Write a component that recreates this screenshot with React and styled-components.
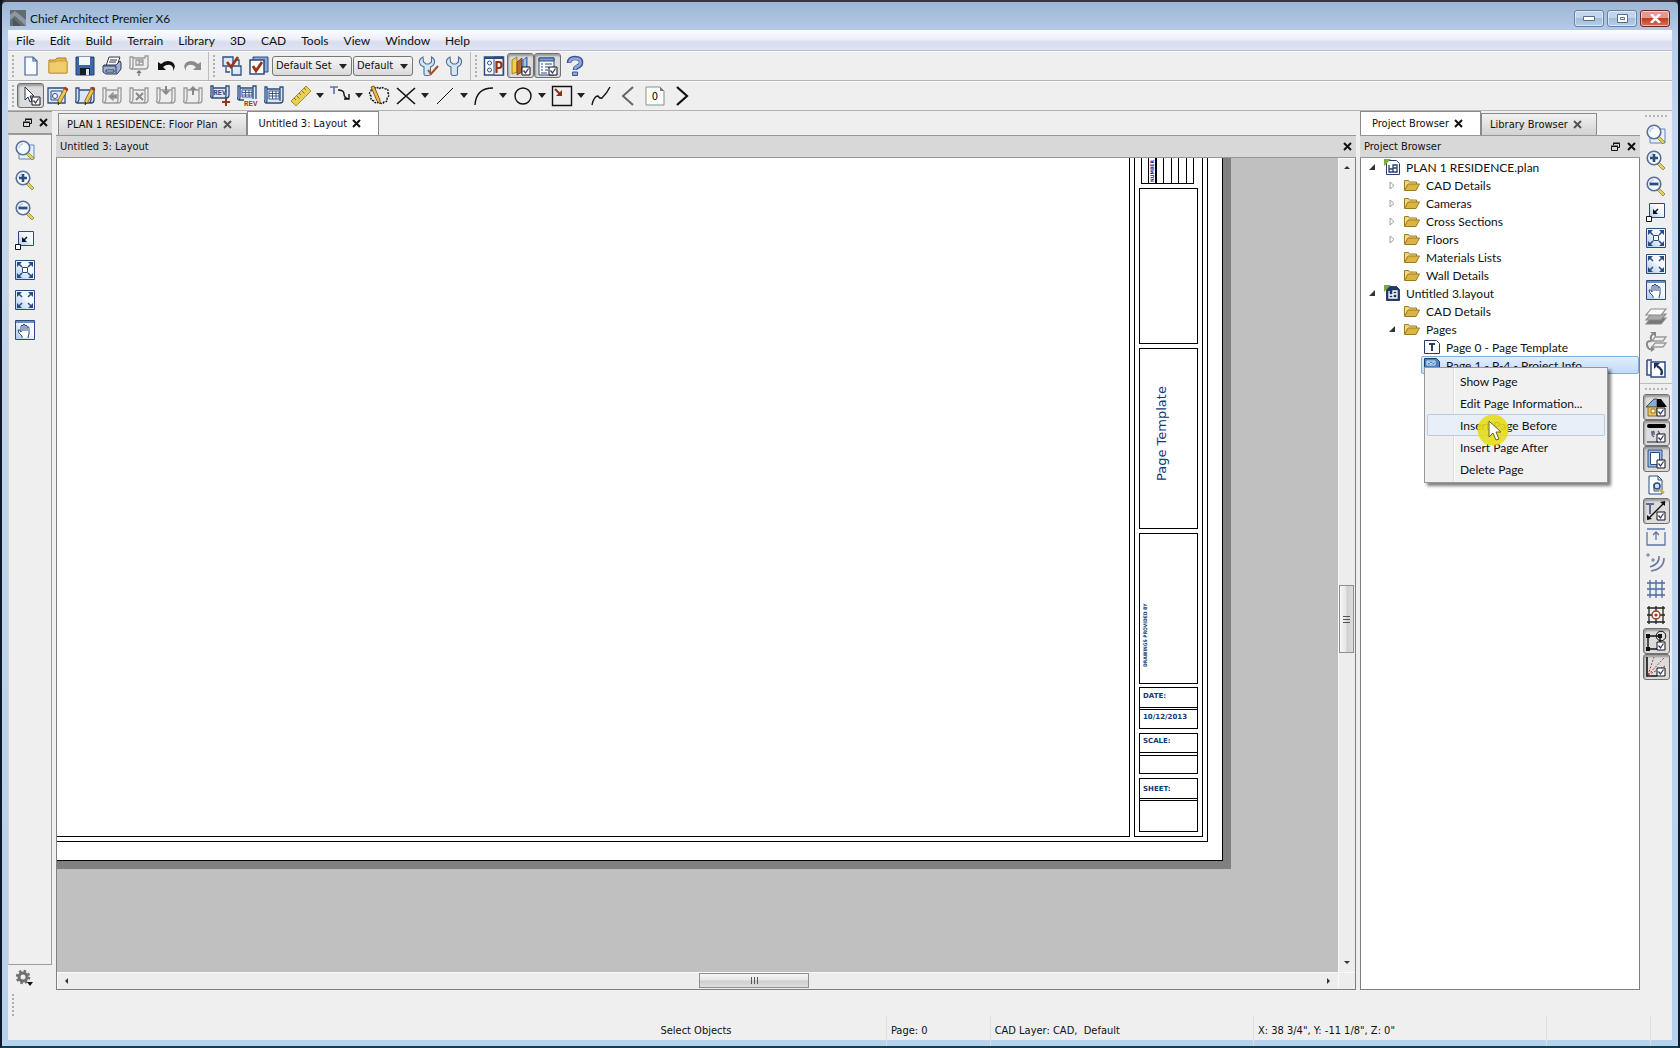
import styled, { createGlobalStyle, css } from 'styled-components';

const GlobalStyle = createGlobalStyle`
  * {
    box-sizing: border-box;
  }
  body {
    margin: 0;
    background: #0a1424;
  }
  button, select {
    font: inherit;
    color: inherit;
    padding: 0;
    margin: 0;
    border: 0;
    background: none;
  }
  svg {
    display: block;
  }
`;

const uiFont = `Lato, 'Open Sans', sans-serif`;
const dockFont = `'DejaVu Sans Condensed', 'DejaVu Sans', sans-serif`;

const Frame = styled.div`
  display: flex;
  flex-direction: column;
  min-height: 100vh;
  padding: 0 6px 6px;
  background: linear-gradient(#9db6d3, #b6cdea 32px, #c2d6ef 130px, #b7d2ec);
  border: 2px solid #10182a;
  border-top-color: #3a3440;
  border-bottom-color: #123c50;
  border-radius: 6px 6px 0 0;
  font: 12px ${uiFont};
  color: #111;
`;

const TitleBar = styled.header`
  display: flex;
  align-items: center;
  gap: 4px;
  height: 28px;
  padding: 4px 2px 0;
  h1 {
    flex: 1;
    margin: 0;
    font-size: 12px;
    font-weight: 400;
  }
`;

const WindowButtons = styled.div`
  display: flex;
  gap: 3px;
`;

const WindowButton = styled.button`
  display: grid;
  place-items: center;
  width: 30px;
  height: 17px;
  border: 1px solid #6482a8;
  border-radius: 3px;
  box-shadow: inset 0 0 0 1px #ffffff80;
  background: linear-gradient(#c3d5ea 45%, #a3bcd9 50%, #b7cfe8);
  ${({ $close }) =>
    $close &&
    css`
      border-color: #6b2a2a;
      background: linear-gradient(#e4998b 45%, #c23c25 50%, #d9705a);
    `}
`;

const Client = styled.div`
  flex: 1;
  display: flex;
  flex-direction: column;
  background: #efefef;
`;

const MenuBar = styled.nav`
  display: flex;
  gap: 15px;
  height: 21px;
  padding-left: 8px;
  background: linear-gradient(#fdfdff, #eef0f9 45%, #d9deef 60%, #e0e3f2);
  border-bottom: 1px solid #b8bcc8;
`;

const ToolBar = styled.div`
  display: flex;
  align-items: center;
  height: 30px;
  padding-left: 4px;
  border-bottom: 1px solid #b4b4b4;
  box-shadow: inset 0 1px #fbfbfb;
`;

const Grip = styled.span`
  flex: none;
  width: 2px;
  height: 22px;
  margin-right: 3px;
  background: repeating-linear-gradient(#b0b0b0 0 2px, transparent 2px 4px);
`;

const Divider = styled.span`
  width: 1px;
  height: 28px;
  margin: 0 4px 0 2px;
  background: #bdbdbd;
`;

const ToolButton = styled.button`
  flex: none;
  display: grid;
  place-items: center;
  width: 27px;
  height: ${({ $tall }) => $tall || 25}px;
  svg {
    overflow: visible;
  }
  ${({ $on }) =>
    $on &&
    css`
      border: 1px solid #707070;
      border-radius: 3px;
      background: #dcdcdc;
      box-shadow: inset 1px 2px 2px #9a9a9a;
    `}
`;

const DropButton = styled.button`
  display: grid;
  place-items: center;
  width: 12px;
  height: 25px;
`;

const SelectBox = styled.label`
  position: relative;
  width: ${({ $width }) => $width}px;
  margin-right: 1px;
  font: 11px ${dockFont};
  select {
    appearance: none;
    width: 100%;
    height: 20px;
    padding-left: 3px;
    border: 1px solid #777;
    border-radius: 3px;
    background: linear-gradient(#f6f6f6, #dadada);
  }
  svg {
    position: absolute;
    right: 5px;
    top: 8px;
    pointer-events: none;
  }
`;

const Workspace = styled.div`
  flex: 1;
  display: flex;
`;

const DockHeader = styled.div`
  display: flex;
  align-items: center;
  gap: 7px;
  height: 23px;
  padding: 0 4px;
  border: 1px solid #979797;
  border-width: 1px 0;
  background: #d8d8d8;
  font: 11px ${dockFont};
  span {
    flex: 1;
  }
`;

const LeftDock = styled.aside`
  display: flex;
  flex-direction: column;
  width: 44px;
  margin-right: 4px;
`;

const LeftTools = styled.div`
  flex: 1;
  display: flex;
  flex-direction: column;
  align-items: center;
  padding-right: 10px;
  border: 1px solid #9b9b9b;
  border-left-color: #d5d5d5;
`;

const GearRow = styled.div`
  display: flex;
  height: 25px;
  padding: 3px 7px;
`;

const Panel = styled.section`
  display: flex;
  flex-direction: column;
  ${({ $width }) => ($width ? `width: ${$width}px; margin-left: 4px;` : 'flex: 1; min-width: 0;')}
`;

const TabList = styled.div`
  display: flex;
  align-items: flex-end;
  height: 24px;
  padding-left: ${({ $inset }) => $inset || 0}px;
  font: 11px ${dockFont};
`;

const Tab = styled.div`
  display: flex;
  align-items: center;
  gap: 5px;
  height: ${({ $active }) => ($active ? 24 : 22)}px;
  padding: ${({ $active }) => ($active ? '0 17px 0 11px' : '0 14px 0 8px')};
  border: 1px solid #8a8a8a;
  border-bottom: 0;
  background: ${({ $active }) => ($active ? '#fff' : 'linear-gradient(#f2f2f2, #d2d2d2)')};
  white-space: nowrap;
`;

const DocumentView = styled.div`
  flex: 1;
  display: grid;
  grid-template: 1fr 17px / 1fr 17px;
  border: 1px solid #808080;
  border-top: 0;
`;

const Canvas = styled.div`
  overflow: hidden;
  background: #c0c0c0;
`;

const ScrollBar = styled.div`
  display: flex;
  align-items: center;
  flex-direction: ${({ $vertical }) => ($vertical ? 'column' : 'row')};
  padding: ${({ $vertical }) => ($vertical ? '6px 0' : '0 6px')};
  background: #ededed;
  box-shadow: inset 1px 1px #fafafa;
`;

const Space = styled.span`
  flex: ${({ $part }) => $part} 1 0;
`;

const Thumb = styled.div`
  display: grid;
  place-items: center;
  width: ${({ $vertical }) => ($vertical ? 15 : 110)}px;
  height: ${({ $vertical }) => ($vertical ? 68 : 15)}px;
  border: 1px solid #8f8f8f;
  background: linear-gradient(${({ $vertical }) => ($vertical ? '90deg' : '180deg')}, #f6f6f6, #e6e6e6 45%, #cfcfcf 55%, #dedede);
`;

const Tree = styled.div`
  flex: 1;
  border: 1px solid #808080;
  border-top: 0;
  background: #fff;
`;

const TreeRow = styled.div`
  position: relative;
  display: flex;
  align-items: center;
  height: 18px;
  margin-left: ${({ $level }) => $level * 20}px;
  padding-left: 5px;
  white-space: nowrap;
`;

const Twisty = styled.button`
  display: grid;
  place-items: center;
  width: 12px;
  height: 18px;
  margin-right: 6px;
`;

const NoTwisty = styled.span`
  flex: 0 0 18px;
`;

const TreeItem = styled.button`
  display: flex;
  align-items: center;
  gap: 6px;
  height: 18px;
  ${({ $selected }) =>
    $selected &&
    css`
      flex: 1;
      margin-left: -3px;
      padding-left: 2px;
      border: 1px solid #84acdd;
      border-radius: 2px;
      background: linear-gradient(#e2eefc, #c2daf8);
    `}
`;

const ContextMenu = styled.div`
  position: absolute;
  z-index: 2;
  left: 23px;
  top: 11px;
  width: 184px;
  padding: 2px;
  border: 1px solid #979797;
  background: linear-gradient(90deg, #efefef 28px, #dcdcdc 28px 29px, #fff 29px 30px, #f1f1f1 30px);
  box-shadow: 3px 3px 3px #00000080;
`;

const ContextItem = styled.button`
  position: relative;
  display: block;
  width: 100%;
  height: 22px;
  padding-left: 33px;
  text-align: left;
  ${({ $hot }) =>
    $hot &&
    css`
      border: 1px solid #b5cdeb;
      border-radius: 2px;
      padding-left: 32px;
      background: #e9eff8;
    `}
`;

const Pointer = styled.svg`
  position: absolute;
  z-index: 3;
  left: 48px;
  top: -2px;
  pointer-events: none;
`;

const RightTools = styled.aside`
  display: flex;
  flex-direction: column;
  align-items: center;
  width: 32px;
  padding-top: 4px;
`;

const SideGrip = styled.span`
  width: 22px;
  height: 2px;
  margin: ${({ $first }) => ($first ? '0 0 4px' : '2px 0 4px')};
  background: repeating-linear-gradient(90deg, #b8b8b8 0 2px, transparent 2px 4px);
`;

const SideLine = styled.span`
  width: 100%;
  height: 1px;
  margin: 2px 0;
  background: #bdbdbd;
`;

const Footer = styled.footer`
  height: 50px;
  padding: 4px 0 0 4px;
`;

const FooterGrip = styled(Grip)`
  display: block;
`;

const StatusBar = styled.div`
  display: grid;
  grid-template-columns: 645fr 231fr 104fr 264fr 294fr 104fr 22fr;
  height: 24px;
  font: 11px/30px ${dockFont};
  white-space: pre;
  span {
    padding-left: 4px;
    border-left: 1px solid #dedede;
  }
  span:nth-child(-n + 2) {
    border-color: transparent;
  }
`;

/* ---- icons, all on a 20px grid ---- */
const NAVY = '#2c4c80';
const ink = { fill: 'none', stroke: '#111', strokeWidth: 1.4 };
const gray = { fill: '#eee', stroke: '#9a9a9a', strokeWidth: 1.3 };
const blue = { fill: '#dbe8f8', stroke: NAVY, strokeWidth: 1.3 };

const check = (
  <g>
    <path d="M11 11h8v8h-8z" fill="#fff" stroke="#111" />
    <path d="M12.5 14.5l2 2.5 3-4.5" fill="none" stroke="#333a70" strokeWidth="1.3" />
  </g>
);
const pencil = (
  <g>
    <path d="M17 1l3 2-7 13-3 3v-5z" fill="#efc64f" stroke="#80601c" strokeWidth="0.9" />
    <path d="M17 1l3 2-1 2-3-2z" fill="#a03428" />
    <path d="M10 16v3l2-2z" fill="#222" />
  </g>
);
const sheet = <path d="M4 4h12V2h3v12q0 3-3 3H2q-2-1-1-3V2h3v11q0 2-2 4M16 4v10q0 2-2 3" />;
const lens = (
  <g>
    <path d="M13 12l6 6-2 2-6-6z" fill="#e6d15c" stroke="#91802c" strokeWidth="0.8" />
    <circle cx="8" cy="8" r="6.8" fill="#f4f9ff" stroke="#5a6f96" strokeWidth="1.6" />
    <path d="M4 8a4 4 0 0 1 4-4" fill="none" stroke="#b7cdec" strokeWidth="1.5" />
  </g>
);
const cornerArrows = (
  <g fill={NAVY}>
    <path d="M2 2h5L2 7zM18 2h-5l5 5zM2 18h5l-5-5zM18 18h-5l5-5z" />
    <path d="M4 4l3 3M16 4l-3 3M4 16l3-3M16 16l-3-3" stroke={NAVY} strokeWidth="1.5" />
  </g>
);
const wrench = (
  <path
    d="M5 1Q1 3 1.500 6.500 2 9.500 6 11v7q0 1.500 2 1.500h2.500q2 0 2-1.500v-7q3.500-1.500 4-4.500Q17 3 13.500 1v5l-2.500 2H8L5.500 6z"
    fill="#d5e6f5"
    stroke="#4c6d96"
    strokeWidth="1.1"
  />
);
const square = <path d="M0.5 0.5h19v19h-19z" fill="url(#tint)" stroke={NAVY} />;

const icons = {
  new: <path d="M4 1h8l4 4v14H4zM12 1v4h4" fill="#f7fbff" stroke="#44659a" strokeWidth="1.2" />,
  open: (
    <g stroke="#a98222">
      <path d="M1 17V4h6l2-2h9v3h1v12z" fill="#e3b84c" />
      <path d="M1 17V6h6l2-1h10v12z" fill="#f0cc6c" stroke="#c79d3c" />
    </g>
  ),
  save: (
    <g>
      <path d="M1 1h18v18H1z" fill="#3d67aa" stroke="#24406f" />
      <path d="M4 1h11v8H4z" fill="#f3f7fc" />
      <path d="M5 12h10v7H5z" fill="#151b2c" />
      <path d="M11 13h3v6h-3z" fill="#dfe6f2" />
    </g>
  ),
  print: (
    <g stroke="#30384c">
      <path d="M7 1h11l-3 9H4z" fill="#fff" />
      <path d="M8 4h7M7 6h7" />
      <path d="M2 9h12l4-4 1 2v6l-4 5H4l-3-2v-6z" fill="#9db2da" />
      <path d="M2 10h12v7" fill="none" />
      <path d="M4 14h8v2H4z" fill="#e9eefa" />
    </g>
  ),
  send: (
    <g {...gray}>
      <path d="M1 1h3v9q0 3-2 3-2-1-1-3zM4 2h12V0h3v10q0 3-3 3H2M7 4h7v5H7zM10 4v5M10 6h4" />
      <path d="M10 20v-4M8 17l2-2 2 2" stroke="#777" />
    </g>
  ),
  undo: <path d="M2 6v8h8l-3-3q5-4 9-1 2 2 1 5 4-6-1-9-6-3-11 2z" fill="#111" />,
  redo: <path d="M18 6v8h-8l3-3q-5-4-9-1-2 2-1 5-4-6 1-9 6-3 11 2z" fill="#8b8b8b" />,
  checks: (
    <g>
      <path d="M1 1h10v9H1z" {...blue} />
      <path d="M10 10h9v9h-9z" {...blue} />
      <path d="M4 11v5h4M13 4h4v5" {...blue} fill="none" />
      <path d="M5 6l4 5 7-10" fill="none" stroke="#9a3418" strokeWidth="2.6" />
    </g>
  ),
  checkBox: (
    <g>
      <path d="M4 1h15v15H4z" fill="#88a8d6" stroke={NAVY} />
      <path d="M1 4h14v14H1z" fill="#fff" stroke={NAVY} strokeWidth="1.5" />
      <path d="M4 10l3 5 6-9" fill="none" stroke="#9a3418" strokeWidth="2.8" />
    </g>
  ),
  wrenchCheck: (
    <g>
      {wrench}
      <path d="M10 14l3 4 7-8" fill="none" stroke="#b04a24" strokeWidth="2" />
    </g>
  ),
  wrench,
  plan: (
    <g>
      <path d="M0.5 1h19v18H0.5z" fill="#fff" stroke={NAVY} strokeWidth="1.5" />
      <path d="M10 1h9v18h-9z" fill="#f3f3f3" stroke={NAVY} />
      <path d="M1 2h18" stroke={NAVY} strokeWidth="2" />
      <g fill="none" stroke={NAVY}>
        <circle cx="5.5" cy="7" r="2" />
        <circle cx="5.5" cy="14" r="2" />
      </g>
      <path d="M12.5 17V6H15q2.5 0 2.5 3T15 12h-2" fill="none" stroke="#943214" strokeWidth="2.2" />
    </g>
  ),
  books: (
    <g>
      <path d="M1 4l5-3v15l-5 2z" fill="#f0cf4b" stroke="#8b701c" strokeWidth="0.8" />
      <path d="M6 6l5-4v14l-5 3z" fill="#b8642c" stroke="#6a3413" strokeWidth="0.8" />
      <path d="M11 5l5-4v15h-5z" fill="#6d98d6" stroke="#2c4c80" strokeWidth="0.8" />
      <path d="M14 3v10" stroke="#dce9fb" />
      {check}
    </g>
  ),
  list: (
    <g>
      <path d="M1 2h15v17H1z" fill="#fff" stroke={NAVY} />
      <path d="M1 2h15v3H1z" fill="#7fa0d2" stroke={NAVY} />
      <path d="M3 8h2M7 8h7M3 11h2M7 11h4M3 14h2M7 14h3M3 17h6" stroke={NAVY} />
      {check}
    </g>
  ),
  help: (
    <g>
      <path d="M4 7q0-5 6-5 6 0 6 4.5 0 3-4 4.5-2 1-2 3" fill="none" stroke="#3d5592" strokeWidth="4.6" />
      <path d="M4.5 6.5q0-4 5.5-4 5.5 0 5.5 4 0 3-3.5 4-2 1-2 3" fill="none" stroke="#8fa6dc" strokeWidth="2.6" />
      <path d="M7.5 16h5v3.5h-5z" fill="#8fa6dc" stroke="#3d5592" />
    </g>
  ),
  select: (
    <g>
      <path d="M4 1v13l3-3 2 5 2-1-2-5h4z" fill="#fff" stroke="#26334e" />
      {check}
    </g>
  ),
  editView: (
    <g>
      <path d="M0 2h17v15H0z" {...blue} />
      <path d="M3 5h11v9H3z" fill="none" stroke={NAVY} />
      <circle cx="7" cy="10" r="2.5" fill="#fff" stroke={NAVY} />
      {pencil}
    </g>
  ),
  editSheet: (
    <g>
      <g {...blue}>{sheet}</g>
      {pencil}
    </g>
  ),
  sheetBack: (
    <g {...gray}>
      {sheet}
      <path d="M15 9v3h-4v2l-4-3.5L11 7v2z" fill="#888" />
    </g>
  ),
  sheetDelete: (
    <g {...gray}>
      {sheet}
      <path d="M7 7l7 7M14 7l-7 7" strokeWidth="2" stroke="#888" />
    </g>
  ),
  sheetDown: (
    <g {...gray}>
      {sheet}
      <path d="M9 0h2v5h3l-4 4-4-4h3z" fill="#888" stroke="none" />
    </g>
  ),
  sheetUp: (
    <g {...gray}>
      {sheet}
      <path d="M9 9h2V4h3l-4-4-4 4h3z" fill="#888" stroke="none" />
    </g>
  ),
  revAdd: (
    <g>
      <path d="M3 2h13V0h3v9q0 3-3 3H2q-2-1-1-3V0h2v9q0 2-1 3M16 2v8q0 1-1 2" {...blue} />
      <text x="3.5" y="9" fontSize="7" fontWeight="700" fontFamily="Liberation Mono" fill={NAVY}>REV</text>
      <path d="M16 12v8M12 16h8" stroke="#8e3a20" strokeWidth="2" />
    </g>
  ),
  revTable: (
    <g>
      <path d="M3 2h13V0h3v14H2q-2-1-1-3V0h2v11q0 2-1 3M16 2v12" {...blue} />
      <path d="M5 4h10v7H5zM5 6.5h10M5 9h10M8.5 4v7M12 4v7" fill="#fff" stroke={NAVY} strokeWidth="0.9" />
      <path d="M7 13h13v7H7z" fill="#efefef" />
      <text x="7" y="20" fontSize="7.5" fontWeight="700" fontFamily="Liberation Mono" fill="#b03a22">REV</text>
    </g>
  ),
  table: (
    <g>
      <path d="M3 3h13V1h3v13q0 3-3 3H2q-2-1-1-3V1h2v13q0 2-1 3M16 3v12" {...blue} />
      <path d="M5 5h10v8H5zM5 7.5h10M5 10h10M8.5 5v8M12 5v8" fill="#fff" stroke={NAVY} strokeWidth="0.9" />
    </g>
  ),
  ruler: (
    <g>
      <path d="M15 0l5 5L5 20l-5-5z" fill="#e8cf55" stroke="#a88c26" />
      <path d="M13 2l2 2M10.5 4.5l3 3M8 7l2 2M5.5 9.5l3 3M3 12l2 2" stroke="#8d7420" />
    </g>
  ),
  textArrow: (
    <g>
      <path d="M0 1h8M4 1v7" stroke="#5a73a8" strokeWidth="1.6" />
      <path d="M8 4q6 0 6 4t5 5M19 8v5h-5" {...ink} />
    </g>
  ),
  cloud: (
    <g>
      <path d="M5 3q3-3 5 0 3-3 5 0 5-1 4 4 2 3-1 5 1 4-3 4-2 3-5 0-4 2-5-1-4-1-3-5-3-3 0-5 0-3 3-2z" {...ink} strokeDasharray="2 1" />
      <path d="M2 1l3-1 6 14v4l-3-3z" fill="#e8bd4a" stroke="#7a4b1b" strokeWidth="0.9" />
    </g>
  ),
  cross: <path d="M1 2l18 16M19 2L1 18" {...ink} strokeWidth="1.6" />,
  line: <path d="M2 18L18 2" {...ink} strokeWidth="1" />,
  arc: <path d="M1 19Q2 2 19 2" {...ink} />,
  circle: <circle cx="10" cy="10" r="8" {...ink} />,
  rect: (
    <g>
      <path d="M0.5 0.5h19v19h-19z" {...ink} />
      <path d="M3 3l6 6" stroke="#8e2f1c" strokeWidth="2" />
      <path d="M10 4v6H4z" fill="#8e2f1c" />
    </g>
  ),
  spline: <path d="M1 19q2-9 6-9 2 3 4 2 5-5 8-11" {...ink} />,
  prev: <path d="M15 1L5 10l10 9" fill="none" stroke="#666" strokeWidth="2" />,
  page: (
    <g>
      <path d="M1 1h14l4 4v14H1z" fill="#fff" stroke="#8b8b8b" />
      <path d="M15 1l4 4h-4z" fill="#777" />
      <text x="10" y="14" fontSize="11" textAnchor="middle" fontFamily="DejaVu Sans Condensed">0</text>
    </g>
  ),
  next: <path d="M5 1l10 9-10 9" fill="none" stroke="#111" strokeWidth="2.2" />,
  zoomWindow: (
    <g>
      <path d="M4 5h15v14H4z" fill="#e6effa" stroke="#6284b8" />
      {lens}
    </g>
  ),
  zoomIn: (
    <g>
      {lens}
      <path d="M8 4v8M4 8h8" stroke={NAVY} strokeWidth="2.6" />
    </g>
  ),
  zoomOut: (
    <g>
      {lens}
      <path d="M3.5 8h9" stroke={NAVY} strokeWidth="2.8" />
    </g>
  ),
  zoomBack: (
    <g>
      <path d="M3.5 1.5h15v14h-15z" fill="url(#tint)" stroke={NAVY} />
      <path d="M7 7v5h5z" fill="#111" />
      <path d="M8 11l4-4" stroke="#111" strokeWidth="1.5" />
      <path d="M0.5 14.5h5v5h-5z" fill="#fff" stroke="#111" />
    </g>
  ),
  fill: (
    <g>
      {square}
      {cornerArrows}
      <path d="M7.5 7.5h5v5h-5z" fill="#fff" stroke={NAVY} />
    </g>
  ),
  extents: (
    <g>
      {square}
      {cornerArrows}
    </g>
  ),
  pan: (
    <g>
      {square}
      <path d="M1 1h18v2H1z" fill="#6f8fc2" />
      <path d="M7 18v-2q-4-3-4-6 2-1 3 2V6q1-2 2 0V5q1-2 2 0v1q1-2 2 0v1q2-1 2 1v6q-1 2-1 4M8 6v5M10 6v5M12 7v4" fill="#fff" stroke={NAVY} />
    </g>
  ),
  layers: (
    <g stroke="#888" strokeWidth="1.1">
      <path d="M5 12h15l-5 6H0z" fill="#777" />
      <path d="M5 8h15l-5 6H0z" fill="#aaa" />
      <path d="M5 3h15l-5 6H0z" fill="#fafafa" />
    </g>
  ),
  layerSwap: (
    <g {...gray}>
      <path d="M9 5h11l-3 4H6zM9 11h11l-3 4H6z" />
      <path d="M7 2q-4 3-1 7M5 9q-5 0-4 4 1 5 5 4" fill="none" stroke="#888" strokeWidth="2" />
      <path d="M4 0h6v5zM5 14v6l4-3z" fill="#888" stroke="none" />
    </g>
  ),
  rotate: (
    <g>
      <path d="M1 2h5M1 2v15h4M5 4h14v15H5z" fill="#fff" stroke={NAVY} strokeWidth="1.5" />
      <path d="M15 17q3-5-4-9" fill="none" stroke="#1d3156" strokeWidth="2.4" />
      <path d="M8 5h6l-6 6z" fill="#1d3156" />
    </g>
  ),
  house: (
    <g>
      <path d="M0 10L8 2h3v8z" fill="#86abd7" stroke="#384b68" />
      <path d="M11 2h4l6 8H11z" fill="#050505" />
      <path d="M2 10h9v9H2z" fill="#f2c556" stroke="#8b6b20" />
      <path d="M5 12h4v4H5z" fill="#fff" stroke="#8b6b20" />
      {check}
    </g>
  ),
  weight: (
    <g>
      <path d="M3 3h15" stroke="#000" strokeWidth="4" strokeLinecap="round" />
      <path d="M8 8q-4 3 0 6M5 9h3v3M12 14q3-3 0-6M1 19h11" fill="none" stroke="#555b80" strokeWidth="1.4" />
      {check}
    </g>
  ),
  sheetFrame: (
    <g>
      <path d="M2 1h14v17H2z" fill="#9dbce5" stroke={NAVY} />
      <path d="M4.5 3.5h9v12h-9z" fill="#fff" stroke={NAVY} />
      {check}
    </g>
  ),
  preview: (
    <g>
      <path d="M3 1h9l4 4v14H3zM12 1v4h4" fill="#fbfdff" stroke={NAVY} />
      <path d="M13 14l5 4" stroke="#c8b23c" strokeWidth="2.5" />
      <path d="M8 9v7h5" fill="none" stroke={NAVY} />
      <circle cx="11" cy="11" r="3" fill="#cfe0f5" stroke={NAVY} strokeWidth="1.5" />
    </g>
  ),
  dimText: (
    <g>
      <path d="M0 3h8M4 3v10" stroke="#60698e" strokeWidth="2" />
      <path d="M2 18L19 1" stroke="#111" strokeWidth="1.4" />
      <path d="M19 0v5l-5-4zM1 19v-5l5 4z" fill="#111" />
      {check}
    </g>
  ),
  elevation: <path d="M1 2h18M1 5v13h18V5M10 13V5M7 8l3-3 3 3" fill="none" stroke="#5d75a8" strokeWidth="1.3" />,
  curve: (
    <g fill="none" stroke="#68789e" strokeWidth="1.6">
      <path d="M13 3q1 8-9 11M18 5q0 11-13 13" />
      <path d="M0 2h4M2 0v4M5 7h4M7 5v4" strokeWidth="1" />
    </g>
  ),
  grid: <path d="M4 1v18M10 1v18M16 1v18M1 4h18M1 10h18M1 16h18" fill="none" stroke="#4c68a6" strokeWidth="1.3" />,
  snap: (
    <g>
      <path d="M3 1v18M10 1v18M17 1v18M1 3h18M1 10h18M1 17h18" fill="none" stroke="#222" strokeWidth="1.3" />
      <circle cx="10" cy="10" r="4" fill="#fff" stroke="#a23a20" strokeWidth="1.5" />
      <circle cx="10" cy="10" r="1.6" fill="#a23a20" />
    </g>
  ),
  endSnap: (
    <g>
      <path d="M2 18V5h12v8M2 18h10" {...ink} />
      <path d="M0 3h4v4H0zM0 16h4v4H0zM12 3h4v4h-4z" fill="#111" />
      <circle cx="15" cy="5" r="4.8" {...ink} strokeWidth="1" />
      {check}
    </g>
  ),
  angleSnap: (
    <g>
      <path d="M1 0v19h10" {...ink} strokeWidth="1.6" />
      <path d="M2 18L8 0M2 18L18 1M2 18l17-9" fill="none" stroke="#aa3838" strokeDasharray="2 1.5" />
      {check}
    </g>
  ),
};

const Icon = ({ name, size = 20 }) => (
  <svg width={size} height={size} viewBox="0 0 20 20" aria-hidden="true">
    {icons[name]}
  </svg>
);

const Caret = () => (
  <svg width="8" height="5" viewBox="0 0 8 5">
    <path d="M0 0h8L4 5z" fill="#222" />
  </svg>
);

const ScrollArrow = ({ turn }) => (
  <svg width="8" height="8" viewBox="0 0 8 8">
    <path d="M1 3h6L4 6z" fill="#333" transform={`rotate(${turn} 4 4)`} />
  </svg>
);

const Close = ({ color = '#111' }) => (
  <button aria-label="Close">
    <svg width="9" height="9" viewBox="0 0 9 9">
      <path d="M1 1l7 7M8 1L1 8" stroke={color} strokeWidth="2" />
    </svg>
  </button>
);

const Float = () => (
  <button aria-label="Float">
    <svg width="9" height="9" viewBox="0 0 9 9">
      <path d="M2.5 3V1.5h6v4H7M0.5 4.5h6v4h-6zM0 4h7M2 1h7" fill="none" stroke="#111" />
    </svg>
  </button>
);

const Tool = ({ name, on, tall }) => (
  <ToolButton aria-label={name} aria-pressed={on ? true : undefined} $on={on} $tall={tall}>
    <Icon name={name} />
  </ToolButton>
);

const Drop = () => (
  <DropButton aria-label="More">
    <Caret />
  </DropButton>
);

const Choice = ({ label, value, width }) => (
  <SelectBox $width={width}>
    <select aria-label={label} defaultValue={value}>
      <option>{value}</option>
    </select>
    <Caret />
  </SelectBox>
);

const Folder = () => (
  <svg width="16" height="12" viewBox="0 0 16 12">
    <path d="M0.5 11V1.5h4l1 1.5h7v2" fill="#f3d981" stroke="#9c7a24" />
    <path d="M0.5 11.5L4 5h11.5L12 11.5z" fill="#dcb440" stroke="#9c7a24" />
  </svg>
);

const FileIcon = ({ dark }) => (
  <svg width="16" height="16" viewBox="0 0 16 16">
    <path d="M2.5 1.5h10l3 3v11h-13z" fill={dark ? '#1f3867' : '#fff'} stroke="#29416f" />
    <path d="M5 6v7h8V6H9v7M9 9h4M5 10h4" fill="none" stroke={dark ? '#fff' : '#29416f'} strokeWidth="1.3" />
    <path d="M0 0h7L0 7z" fill="#79ad3e" />
  </svg>
);

const PageIcon = ({ filled }) => (
  <svg width="16" height="14" viewBox="0 0 16 14">
    <path d="M0.5 0.5h12l3 3v10H0.5z" fill={filled ? '#4c82c2' : '#fff'} stroke="#223d66" />
    {filled ? (
      <path d="M3 3h8v4H3zM3 5l2-1 2 2 3-2M3 10h9" fill="none" stroke="#d9e8fb" />
    ) : (
      <path d="M5 4h6M8 4v7" stroke="#223d66" strokeWidth="2" />
    )}
  </svg>
);

const TreeTwisty = ({ open }) => (
  <Twisty aria-label={open ? 'Collapse' : 'Expand'}>
    <svg width="7" height="9" viewBox="0 0 7 9">
      {open ? (
        <path d="M6 1v6H0z" fill="#333" />
      ) : (
        <path d="M1 1l4 3.5L1 8z" fill="#fff" stroke="#a0a0a0" />
      )}
    </svg>
  </Twisty>
);

const rows = [
  { level: 0, text: 'PLAN 1 RESIDENCE.plan', open: true, icon: <FileIcon /> },
  { level: 1, text: 'CAD Details', open: false },
  { level: 1, text: 'Cameras', open: false },
  { level: 1, text: 'Cross Sections', open: false },
  { level: 1, text: 'Floors', open: false },
  { level: 1, text: 'Materials Lists' },
  { level: 1, text: 'Wall Details' },
  { level: 0, text: 'Untitled 3.layout', open: true, icon: <FileIcon dark /> },
  { level: 1, text: 'CAD Details' },
  { level: 1, text: 'Pages', open: true },
  { level: 2, text: 'Page 0 - Page Template', icon: <PageIcon /> },
  { level: 2, text: 'Page 1 - P-4 - Project Info', icon: <PageIcon filled />, selected: true },
];

const contextItems = ['Show Page', 'Edit Page Information...', 'Insert Page Before', 'Insert Page After', 'Delete Page'];

const PageMenu = () => (
  <ContextMenu role="menu">
    {contextItems.map((item) => {
      const hot = item === 'Insert Page Before';
      return (
        <ContextItem key={item} role="menuitem" $hot={hot}>
          {item}
          {hot && (
            <Pointer width="34" height="34" viewBox="0 0 34 34">
              <circle cx="17" cy="17" r="15.5" fill="#e6dc14" fillOpacity="0.88" />
              <path d="M13 8v16l4-4 3 7 3-1-3-7h5z" fill="#fff" stroke="#6d6620" />
            </Pointer>
          )}
        </ContextItem>
      );
    })}
  </ContextMenu>
);

// bottom right corner of the layout sheet with its title block
const Sheet = () => (
  <svg width="1175" height="712" viewBox="57 158 1175 712">
    <path d="M57 158h1174v711H57z" fill="#808080" />
    <path d="M57 158h1166v703H57z" fill="#fff" />
    <g fill="none" stroke="#000" shapeRendering="crispEdges">
      <path d="M1222.5 158v702.5H57" />
      <path d="M1129.5 158v678.5H57M1207.5 158v683.5H57M1134.5 158v678.5h68V158" />
      <path d="M1141.5 158v25.5h52V158M1148.5 158v25M1163.5 158v25M1171.5 158v25M1178.5 158v25M1186.5 158v25" />
      <path d="M1156 158v25" strokeWidth="2" />
      <path d="M1139.5 188.5h58v155h-58zM1139.5 348.5h58v180h-58zM1139.5 533.5h58v150h-58z" />
      <path d="M1139.5 687.5h58v41h-58zM1139.5 707.5h58M1139.5 709.5h58" />
      <path d="M1139.5 733.5h58v40h-58zM1139.5 752.5h58M1139.5 755.5h58" />
      <path d="M1139.5 778.5h58v53h-58zM1139.5 798.5h58M1139.5 800.5h58" />
    </g>
    <g fill="#123a70" fontFamily="DejaVu Sans" fontSize="7" fontWeight="700">
      <text x="1143" y="698">DATE:</text>
      <text x="1143" y="719">10/12/2013</text>
      <text x="1143" y="743">SCALE:</text>
      <text x="1143" y="791">SHEET:</text>
      <text transform="translate(1147 667) rotate(-90)" fontFamily="DejaVu Sans Condensed" fontSize="5">DRAWINGS PROVIDED BY</text>
      <text transform="translate(1154 182) rotate(-90)" fontFamily="DejaVu Sans Condensed" fontSize="5" fill="#1a1a8c">NUMBER</text>
      <text transform="translate(1166 481) rotate(-90)" fontSize="13" fontWeight="400">Page Template</text>
    </g>
  </svg>
);

const menus = ['File', 'Edit', 'Build', 'Terrain', 'Library', '3D', 'CAD', 'Tools', 'View', 'Window', 'Help'];
const zoomTools = ['zoomWindow', 'zoomIn', 'zoomOut', 'zoomBack', 'fill', 'extents', 'pan'];
const layoutTools = ['editView', 'editSheet', 'sheetBack', 'sheetDelete', 'sheetDown', 'sheetUp', 'revAdd', 'revTable', 'table'];
const toggles = ['house', 'weight', 'sheetFrame', 'preview', 'dimText', 'elevation', 'curve', 'grid', 'snap', 'endSnap', 'angleSnap'];
const toggledOn = ['house', 'weight', 'sheetFrame', 'dimText', 'endSnap', 'angleSnap'];

const App = () => (
  <Frame>
    <GlobalStyle />
    <svg width="0" height="0">
      <linearGradient id="tint" x1="0" y1="1" x2="1" y2="0">
        <stop offset="0" stopColor="#a9c6ec" />
        <stop offset="0.6" stopColor="#f6faff" />
      </linearGradient>
    </svg>
    <TitleBar>
      <svg width="16" height="16" viewBox="0 0 16 16">
        <path d="M0 0h16v16H0z" fill="#626c72" />
        <path d="M0 5L5 1l11 9v6L5 6 0 10z" fill="#8e999e" />
        <path d="M3 16V8l8 8z" fill="#4c5559" />
      </svg>
      <h1>Chief Architect Premier X6</h1>
      <WindowButtons>
        <WindowButton aria-label="Minimize">
          <svg width="12" height="5"><path d="M0.5 0.5h11v4H0.5z" fill="#fff" stroke="#566b88" /></svg>
        </WindowButton>
        <WindowButton aria-label="Maximize">
          <svg width="11" height="9"><path d="M0.5 0.5h10v8H0.5zM3.5 3.5h4v2h-4z" fill="#fff" stroke="#566b88" /></svg>
        </WindowButton>
        <WindowButton aria-label="Close" $close>
          <svg width="11" height="9"><path d="M1 0l9 9M10 0L1 9" stroke="#fff" strokeWidth="2.5" /></svg>
        </WindowButton>
      </WindowButtons>
    </TitleBar>
    <Client>
      <MenuBar>
        {menus.map((menu) => (
          <button key={menu}>{menu}</button>
        ))}
      </MenuBar>
      <ToolBar>
        <Grip />
        {['new', 'open', 'save', 'print', 'send', 'undo', 'redo'].map((name) => (
          <Tool key={name} name={name} />
        ))}
        <Divider />
        <Grip />
        <Tool name="checks" />
        <Tool name="checkBox" />
        <Choice label="Layer set" value="Default Set" width={80} />
        <Choice label="Defaults" value="Default" width={60} />
        <Tool name="wrenchCheck" />
        <Tool name="wrench" />
        <Divider />
        <Grip />
        <Tool name="plan" />
        <Tool name="books" on />
        <Tool name="list" on />
        <Tool name="help" />
      </ToolBar>
      <ToolBar>
        <Grip />
        <Tool name="select" on />
        {layoutTools.map((name) => (
          <Tool key={name} name={name} />
        ))}
        <Tool name="ruler" />
        <Drop />
        <Tool name="textArrow" />
        <Drop />
        <Tool name="cloud" />
        {['cross', 'line', 'arc', 'circle', 'rect'].map((name) => [
          <Tool key={name} name={name} />,
          <Drop key={`${name}-more`} />,
        ])}
        <Tool name="spline" />
        <Tool name="prev" />
        <Tool name="page" />
        <Tool name="next" />
      </ToolBar>
      <Workspace>
        <LeftDock>
          <DockHeader>
            <span />
            <Float />
            <Close />
          </DockHeader>
          <LeftTools>
            {zoomTools.map((name) => (
              <Tool key={name} name={name} tall={30} />
            ))}
          </LeftTools>
          <GearRow>
            <button aria-label="Customize">
              <svg width="20" height="18" viewBox="0 0 20 18">
                <circle cx="8" cy="8" r="4" fill="none" stroke="#707070" strokeWidth="3" />
                <circle cx="8" cy="8" r="6" fill="none" stroke="#707070" strokeWidth="2.5" strokeDasharray="2.4 2.3" />
                <path d="M12 13h6l-3 4z" fill="#111" />
              </svg>
            </button>
          </GearRow>
        </LeftDock>
        <Panel>
          <TabList $inset={2}>
            <Tab>
              <button>PLAN 1 RESIDENCE: Floor Plan</button>
              <Close color="#555" />
            </Tab>
            <Tab $active>
              <button>Untitled 3: Layout</button>
              <Close />
            </Tab>
          </TabList>
          <DockHeader>
            <span>Untitled 3: Layout</span>
            <Close />
          </DockHeader>
          <DocumentView>
            <Canvas>
              <Sheet />
            </Canvas>
            <ScrollBar $vertical>
              <ScrollArrow turn={180} />
              <Space $part={411} />
              <Thumb $vertical>
                <svg width="7" height="8"><path d="M0 1.5h7M0 4.5h7M0 7.5h7" stroke="#555" /></svg>
              </Thumb>
              <Space $part={304} />
              <ScrollArrow turn={0} />
            </ScrollBar>
            <ScrollBar>
              <ScrollArrow turn={90} />
              <Space $part={630} />
              <Thumb>
                <svg width="8" height="7"><path d="M1.5 0v7M4.5 0v7M7.5 0v7" stroke="#555" /></svg>
              </Thumb>
              <Space $part={516} />
              <ScrollArrow turn={-90} />
            </ScrollBar>
            <ScrollBar />
          </DocumentView>
        </Panel>
        <Panel $width={280}>
          <TabList>
            <Tab $active>
              <button>Project Browser</button>
              <Close />
            </Tab>
            <Tab>
              <button>Library Browser</button>
              <Close color="#555" />
            </Tab>
          </TabList>
          <DockHeader>
            <span>Project Browser</span>
            <Float />
            <Close />
          </DockHeader>
          <Tree>
            {rows.map((row, i) => (
              <TreeRow key={i} $level={row.level}>
                {row.open === undefined ? <NoTwisty /> : <TreeTwisty open={row.open} />}
                <TreeItem $selected={row.selected}>
                  {row.icon || <Folder />}
                  {row.text}
                </TreeItem>
                {row.selected && <PageMenu />}
              </TreeRow>
            ))}
          </Tree>
        </Panel>
        <RightTools>
          <SideGrip $first />
          {[...zoomTools, 'layers', 'layerSwap', 'rotate'].map((name) => (
            <Tool key={name} name={name} tall={26} />
          ))}
          <SideLine />
          <SideGrip />
          {toggles.map((name) => (
            <Tool key={name} name={name} tall={26} on={toggledOn.includes(name)} />
          ))}
        </RightTools>
      </Workspace>
      <Footer>
        <FooterGrip />
        <StatusBar>
          <span />
          <span>Select Objects</span>
          <span>Page: 0</span>
          <span>CAD Layer: CAD,  Default</span>
          <span>{'X: 38 3/4", Y: -11 1/8", Z: 0"'}</span>
          <span />
          <span />
        </StatusBar>
      </Footer>
    </Client>
  </Frame>
);

export default App;
